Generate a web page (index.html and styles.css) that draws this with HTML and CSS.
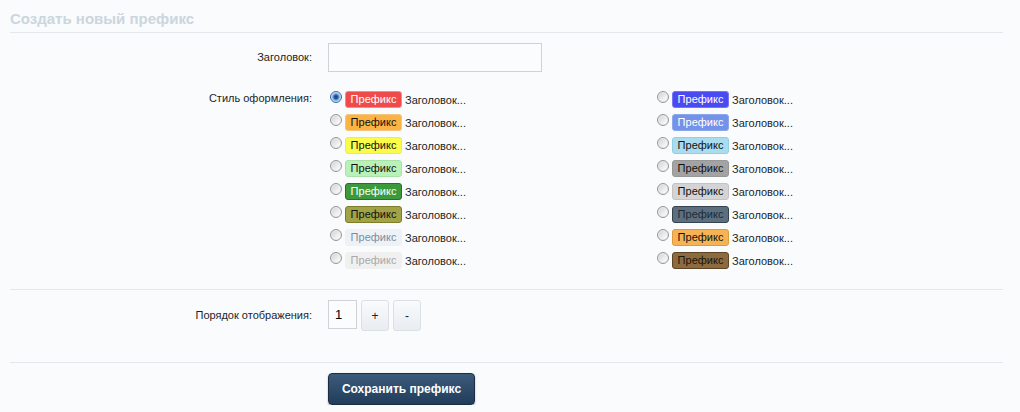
FILE: index.html
```
<!DOCTYPE html>
<html lang="ru">
<head>
    <meta charset="UTF-8">
    <title>Создать новый префикс</title>
    <link rel="stylesheet" href="styles.css">
</head>
<body>
    <div class="page">
        <h2 class="heading">Создать новый префикс</h2>

        <form class="form">
            <dl class="ctrl-unit unit-title">
                <dt>Заголовок:</dt>
                <dd><input type="text" class="text-ctrl title-ctrl"></dd>
            </dl>

            <dl class="ctrl-unit unit-style">
                <dt>Стиль оформления:</dt>
                <dd>
                    <ul class="prefix-list">
                        <li><input type="radio" name="css" class="radio" checked><span class="prefix p-red">Префикс</span> Заголовок...</li>
                        <li><input type="radio" name="css" class="radio"><span class="prefix p-blue">Префикс</span> Заголовок...</li>
                        <li><input type="radio" name="css" class="radio"><span class="prefix p-orange">Префикс</span> Заголовок...</li>
                        <li><input type="radio" name="css" class="radio"><span class="prefix p-royal">Префикс</span> Заголовок...</li>
                        <li><input type="radio" name="css" class="radio"><span class="prefix p-yellow">Префикс</span> Заголовок...</li>
                        <li><input type="radio" name="css" class="radio"><span class="prefix p-sky">Префикс</span> Заголовок...</li>
                        <li><input type="radio" name="css" class="radio"><span class="prefix p-lightgreen">Префикс</span> Заголовок...</li>
                        <li><input type="radio" name="css" class="radio"><span class="prefix p-gray">Префикс</span> Заголовок...</li>
                        <li><input type="radio" name="css" class="radio"><span class="prefix p-green">Префикс</span> Заголовок...</li>
                        <li><input type="radio" name="css" class="radio"><span class="prefix p-silver">Префикс</span> Заголовок...</li>
                        <li><input type="radio" name="css" class="radio"><span class="prefix p-olive">Префикс</span> Заголовок...</li>
                        <li><input type="radio" name="css" class="radio"><span class="prefix p-steel">Префикс</span> Заголовок...</li>
                        <li><input type="radio" name="css" class="radio"><span class="prefix p-primary">Префикс</span> Заголовок...</li>
                        <li><input type="radio" name="css" class="radio"><span class="prefix p-amber">Префикс</span> Заголовок...</li>
                        <li><input type="radio" name="css" class="radio"><span class="prefix p-secondary">Префикс</span> Заголовок...</li>
                        <li><input type="radio" name="css" class="radio"><span class="prefix p-brown">Префикс</span> Заголовок...</li>
                    </ul>
                </dd>
            </dl>

            <hr class="separator">

            <dl class="ctrl-unit unit-order">
                <dt>Порядок отображения:</dt>
                <dd class="spin">
                    <input type="text" class="text-ctrl order-ctrl" value="1">
                    <button type="button" class="spin-btn">+</button>
                    <button type="button" class="spin-btn">-</button>
                </dd>
            </dl>

            <hr class="separator">

            <dl class="ctrl-unit unit-submit">
                <dt></dt>
                <dd><button type="submit" class="button-primary">Сохранить префикс</button></dd>
            </dl>
        </form>
    </div>
</body>
</html>
```

FILE: styles.css
```
body {
    margin: 0;
    background: #f9fbfd;
    font-family: 'Liberation Sans', Arial, sans-serif;
    font-size: 11px;
    color: #1e1e1e;
}

.page {
    padding: 0 17px 0 10px;
}

.heading {
    margin: 0;
    padding: 9px 0 3px;
    font-size: 15px;
    line-height: 20px;
    font-weight: bold;
    color: #cbd6de;
    border-bottom: 1px solid #e3e8ec;
}

.form {
    margin: 0;
}

.ctrl-unit {
    display: grid;
    grid-template-columns: 302px 1fr;
    column-gap: 16px;
    margin: 0;
}

.ctrl-unit dt {
    text-align: right;
    line-height: 14px;
}

.ctrl-unit dd {
    margin: 0;
}

.unit-title {
    margin-top: 10px;
}

.unit-title dt {
    padding-top: 7px;
}

.text-ctrl {
    box-sizing: border-box;
    height: 29px;
    border: 1px solid #cfd3d6;
    background: #fbfcfe;
    font-family: inherit;
    font-size: 13px;
    padding: 0 6px;
    outline: none;
}

.title-ctrl {
    width: 214px;
}

.unit-style {
    margin-top: 16px;
}

.unit-style dt {
    padding-top: 3px;
}

.prefix-list {
    list-style: none;
    margin: 0;
    padding: 0;
    display: grid;
    grid-template-columns: 327px 327px;
    grid-auto-rows: 23px;
}

.prefix-list li {
    display: flex;
    align-items: center;
    white-space: pre;
}

.radio {
    appearance: none;
    -webkit-appearance: none;
    box-sizing: border-box;
    width: 12px;
    height: 12px;
    margin: -5px 3px 0 2px;
    border: 1px solid #979797;
    border-radius: 50%;
    background: linear-gradient(135deg, #cfcfcf, #f4f4f4 70%, #ffffff);
    box-shadow: inset 0 0 0 1px #ececec;
}

.radio:checked {
    border-color: #3c6ba3;
    background: radial-gradient(circle, #143a69 0, #2a62a8 2px, #6fa2dc 3px, #d9e7f6 5px);
    box-shadow: none;
}

.prefix {
    display: inline-block;
    box-sizing: border-box;
    width: 57px;
    height: 17px;
    line-height: 15px;
    text-align: center;
    border: 1px solid transparent;
    border-radius: 3px;
    font-size: 11px;
}

.p-red { background: #f04b4b; border-color: #f78a8a; color: #fff; }
.p-orange { background: #fbb345; border-color: #f3c77e; color: #111; }
.p-yellow { background: #fbfb4a; border-color: #e8e870; color: #111; }
.p-lightgreen { background: #b9f1b9; border-color: #a9e2a9; color: #111; }
.p-green { background: #3c9a3c; border-color: #257325; color: #fff; }
.p-olive { background: #a2a246; border-color: #7d7d2a; color: #111; }
.p-primary { background: #eef2f6; border-color: #eef2f6; color: #7b8d9e; }
.p-secondary { background: #f0f0f0; border-color: #f0f0f0; color: #a9a9a9; }
.p-blue { background: #4a4af2; border-color: #7676f6; color: #fff; }
.p-royal { background: #7392e8; border-color: #8ca6ee; color: #fff; }
.p-sky { background: #a9dcee; border-color: #91cfe3; color: #111; }
.p-gray { background: #a3a3a3; border-color: #979797; color: #111; }
.p-silver { background: #d4d4d4; border-color: #c3c3c3; color: #111; }
.p-steel { background: #5d6f7e; border-color: #34434f; color: #1c2a36; }
.p-amber { background: #f5b354; border-color: #dc9b3c; color: #111; }
.p-brown { background: #8c6b41; border-color: #5e4526; color: #1e1408; }

.separator {
    margin: 0;
    border: 0;
    border-top: 1px solid #e3e8ec;
}

.unit-style + .separator {
    margin-top: 17px;
}

.unit-order {
    margin-top: 10px;
}

.unit-order dt {
    padding-top: 8px;
}

.spin {
    display: flex;
    align-items: flex-start;
    gap: 4px;
}

.order-ctrl {
    width: 29px;
    padding: 0 6px;
    font-size: 13px;
}

.spin-btn {
    box-sizing: border-box;
    width: 28px;
    height: 31px;
    padding: 0;
    border: 1px solid #dbe0e5;
    border-radius: 3px;
    background: linear-gradient(#f9fbfd, #e8edf2);
    font-family: inherit;
    font-size: 12px;
    color: #222;
}

.unit-order + .separator {
    margin-top: 31px;
}

.unit-submit {
    margin-top: 10px;
}

.button-primary {
    box-sizing: border-box;
    width: 147px;
    height: 32px;
    padding: 0;
    border: 1px solid #1a2d42;
    border-radius: 4px;
    background: linear-gradient(#3c5a7a, #213d5b);
    box-shadow: 0 1px 2px rgba(0, 0, 0, 0.3);
    font-family: inherit;
    font-size: 12px;
    font-weight: bold;
    color: #fff;
}
```
